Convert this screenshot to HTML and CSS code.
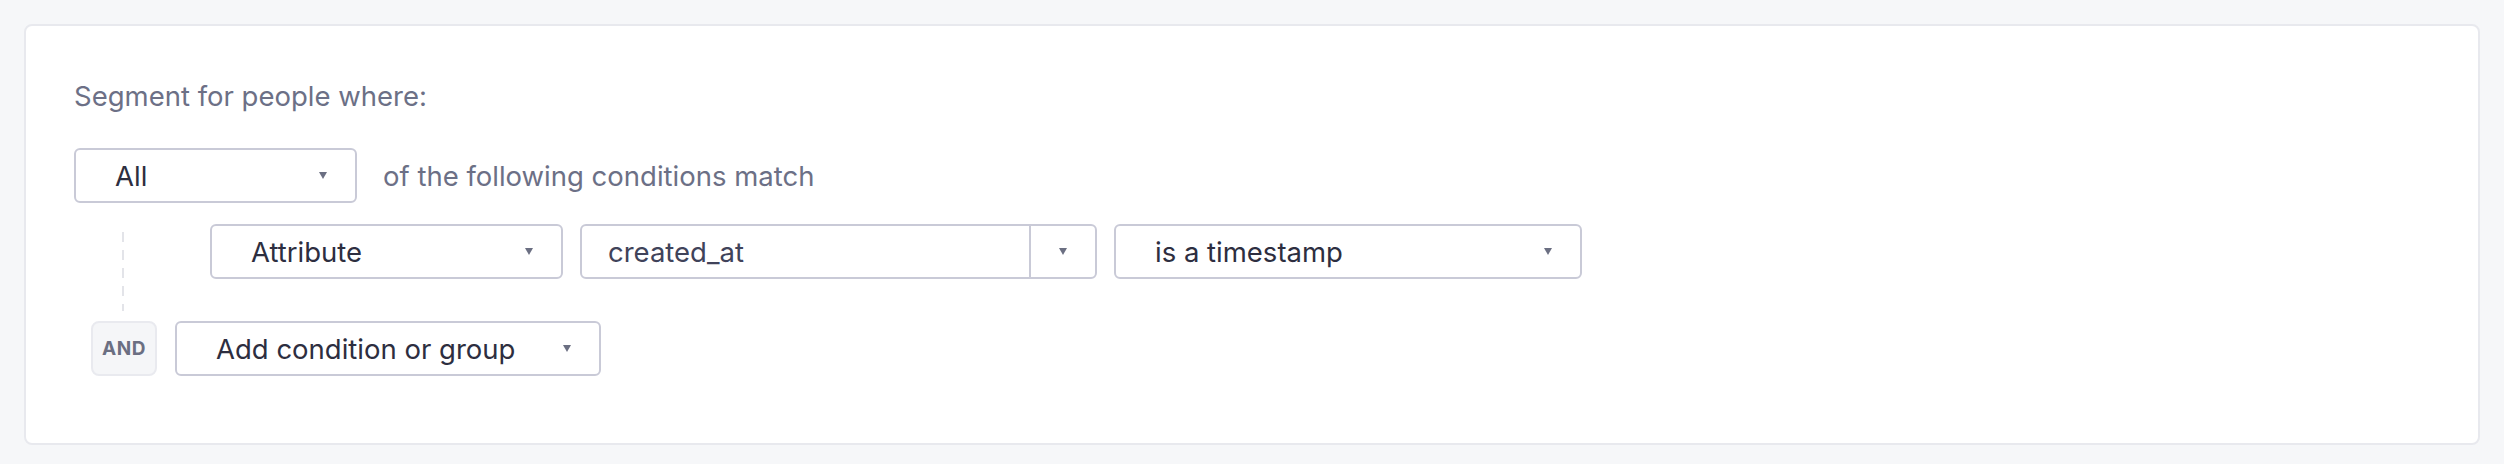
FILE: index.html
```html
<!DOCTYPE html>
<html lang="en">

<head>
    <meta charset="UTF-8">
    <meta name="viewport" content="width=device-width, initial-scale=1.0">
    <title>Segment builder</title>
    <link rel="stylesheet" href="styles.css">
</head>

<body>
    <div class="segment-card">
        <p class="lead">Segment for people where:</p>

        <div class="match-row">
            <div class="select select-match">
                <span>All</span>
                <i class="caret"></i>
            </div>
            <span class="match-text">of the following conditions match</span>
        </div>

        <div class="group-body">
            <div class="rail"><div class="rail-line"></div></div>
            <div class="rows">
                <div class="condition">
                    <div class="select select-type">
                        <span>Attribute</span>
                        <i class="caret"></i>
                    </div>
                    <div class="combo">
                        <span class="combo-input">created_at</span>
                        <span class="combo-toggle"><i class="caret"></i></span>
                    </div>
                    <div class="select select-op">
                        <span>is a timestamp</span>
                        <i class="caret"></i>
                    </div>
                </div>
            </div>
        </div>

        <div class="add-row">
            <span class="and-badge">AND</span>
            <div class="select select-add">
                <span>Add condition or group</span>
                <i class="caret"></i>
            </div>
        </div>
    </div>
</body>

</html>
```

FILE: styles.css
```css
body {
    margin: 0;
    background-color: #f6f7f9;
    font-family: 'Inter', 'Noto Sans', sans-serif;
    color: #2d2e40;
}

.segment-card {
    margin: 24px 24px 0;
    padding: 50px 48px 67px;
    background: #ffffff;
    border: 2px solid #e8e9ee;
    border-radius: 8px;
}

.lead {
    margin: 0;
    font-size: 27.5px;
    line-height: 40px;
    color: #6c7086;
}

.match-row {
    display: flex;
    align-items: center;
    gap: 26px;
    margin-top: 32px;
}

.match-text {
    font-size: 27.5px;
    color: #6c7086;
}

/* dropdowns */
.select {
    display: flex;
    align-items: center;
    justify-content: space-between;
    box-sizing: border-box;
    height: 55px;
    padding: 0 28px 0 39px;
    background: #ffffff;
    border: 2px solid #c9cad7;
    border-radius: 6px;
    font-size: 27.5px;
    color: #2d2e40;
}

.caret {
    display: block;
    width: 0;
    height: 0;
    border-left: 4.5px solid transparent;
    border-right: 4.5px solid transparent;
    border-top: 7px solid #6b6f82;
}

.select-match {
    width: 283px;
}

.select-type {
    width: 353px;
}

.select-op {
    width: 468px;
}

.select-add {
    width: 426px;
}

/* attribute name input with its toggle */
.combo {
    display: flex;
    box-sizing: border-box;
    width: 517px;
    height: 55px;
    border: 2px solid #c9cad7;
    border-radius: 6px;
}

.combo-input {
    flex: 1;
    display: flex;
    align-items: center;
    padding-left: 26px;
    font-size: 27.5px;
    color: #40435a;
}

.combo-toggle {
    display: flex;
    align-items: center;
    justify-content: center;
    width: 64px;
    border-left: 2px solid #c9cad7;
}

/* condition group */
.group-body {
    display: flex;
    margin-top: 21px;
}

.rail {
    display: flex;
    box-sizing: border-box;
    width: 136px;
    padding: 8px 0 0 48px;
}

.rail-line {
    width: 2px;
    background: repeating-linear-gradient(to bottom, #e3e4e9 0 10px, transparent 10px 18px);
}

.rows {
    display: flex;
    flex-direction: column;
    padding-bottom: 32px;
}

.condition {
    display: flex;
    gap: 17px;
}

.add-row {
    display: flex;
    gap: 18px;
    margin: 10px 0 0 17px;
}

.and-badge {
    display: flex;
    align-items: center;
    justify-content: center;
    box-sizing: border-box;
    width: 66px;
    height: 55px;
    background: #f5f6f8;
    border: 2px solid #e9eaef;
    border-radius: 8px;
    font-size: 19px;
    font-weight: 700;
    letter-spacing: 0.5px;
    color: #6b6f82;
}
```
